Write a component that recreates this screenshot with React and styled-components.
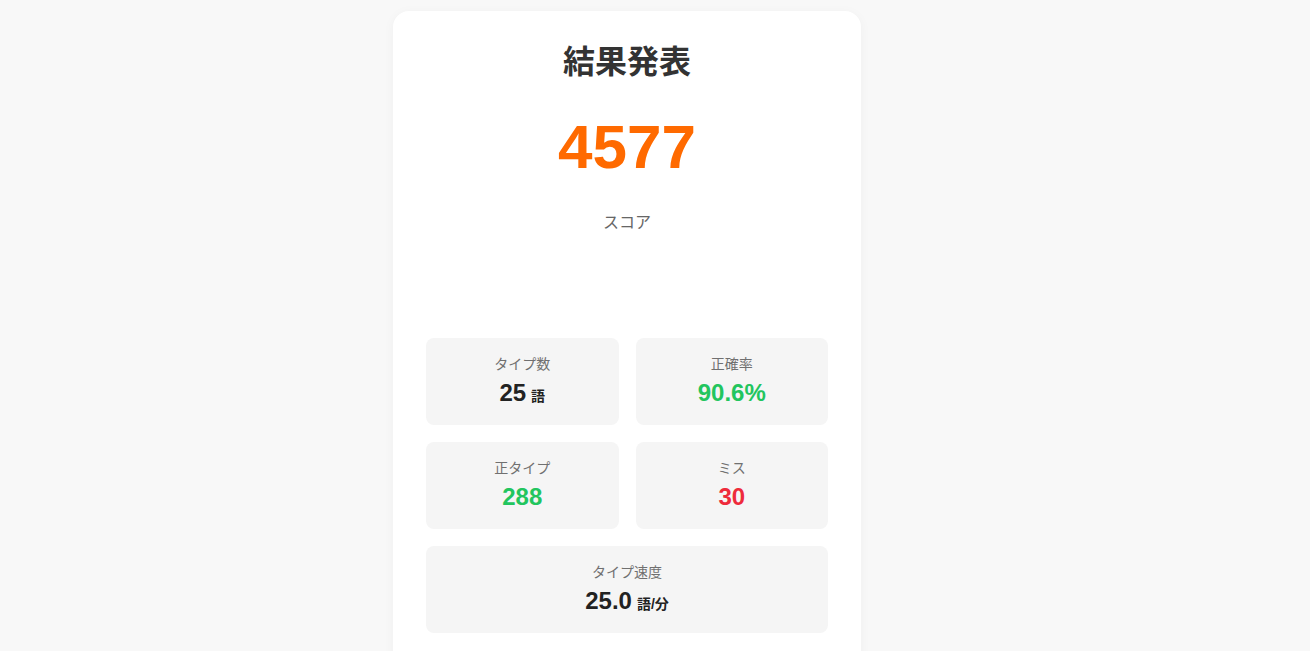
import styled, { createGlobalStyle } from 'styled-components';

const GlobalStyle = createGlobalStyle`
  html, body {
    margin: 0;
    padding: 0;
    background: #f8f8f8;
    font-family: 'Liberation Sans', 'Noto Sans CJK JP', sans-serif;
    color: #333;
  }
`;

const stats = [
  { label: 'タイプ数', value: '25', unit: '語' },
  { label: '正確率', value: '90.6%', color: '#22c55e' },
  { label: '正タイプ', value: '288', color: '#22c55e' },
  { label: 'ミス', value: '30', color: '#ee2b3b' },
  { label: 'タイプ速度', value: '25.0', unit: '語/分', wide: true },
];

export default function App() {
  return (
    <>
      <GlobalStyle />
      <Page>
        <Card>
          <Title>結果発表</Title>
          <Score>4577</Score>
          <ScoreLabel>スコア</ScoreLabel>

          <Grid>
            {stats.map((s) => (
              <StatBox key={s.label} $wide={s.wide}>
                <StatLabel>{s.label}</StatLabel>
                <StatValue $color={s.color}>
                  {s.value}
                  {s.unit && <Unit>{s.unit}</Unit>}
                </StatValue>
              </StatBox>
            ))}
          </Grid>
        </Card>
      </Page>
    </>
  );
}

const Page = styled.div`
  min-height: 100vh;
  display: flex;
  justify-content: center;
  align-items: flex-start;
  padding: 11px 56px 0 0;
  box-sizing: border-box;
`;

const Card = styled.div`
  width: 468px;
  box-sizing: border-box;
  background: #fff;
  border-radius: 16px;
  padding: 32px 33px 40px;
  box-shadow: 0 2px 12px rgba(0, 0, 0, 0.04);
  display: flex;
  flex-direction: column;
  align-items: center;
`;

const Title = styled.h1`
  margin: 0;
  font-size: 32px;
  line-height: 38px;
  font-weight: 700;
  color: #333;
`;

const Score = styled.div`
  margin-top: 28px;
  font-size: 62px;
  line-height: 76px;
  font-weight: 700;
  color: #ff6a00;
`;

const ScoreLabel = styled.div`
  margin-top: 26px;
  font-size: 16px;
  line-height: 24px;
  color: #666;
`;

const Grid = styled.div`
  margin-top: 103px;
  width: 100%;
  display: grid;
  grid-template-columns: 1fr 1fr;
  gap: 17px;
`;

const StatBox = styled.div`
  grid-column: ${(p) => (p.$wide ? '1 / -1' : 'auto')};
  background: #f5f5f5;
  border-radius: 8px;
  padding: 16px 12px 18px;
  display: flex;
  flex-direction: column;
  align-items: center;
  gap: 4px;
`;

const StatLabel = styled.div`
  font-size: 14px;
  line-height: 20px;
  color: #707070;
`;

const StatValue = styled.div`
  font-size: 24px;
  line-height: 29px;
  height: 29px;
  font-weight: 700;
  color: ${(p) => p.$color || '#222'};
`;

const Unit = styled.span`
  margin-left: 5px;
  font-size: 14px;
  line-height: 1;
  font-weight: 700;
`;
